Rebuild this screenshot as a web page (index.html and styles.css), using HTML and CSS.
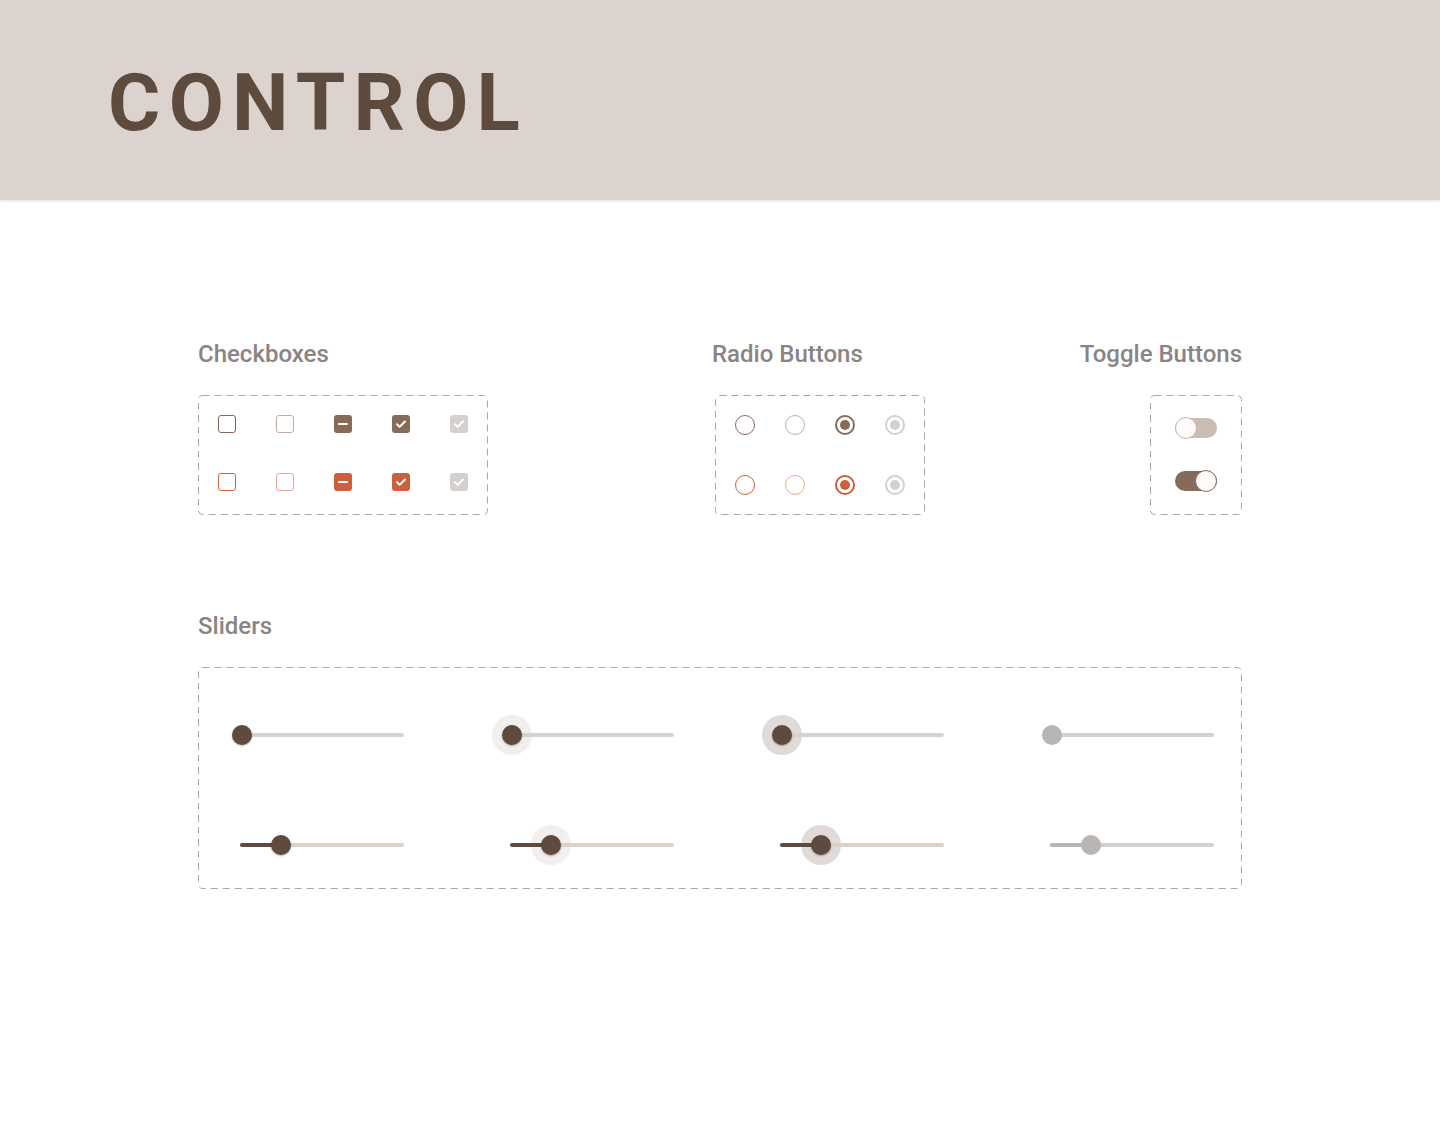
FILE: index.html
```html
<!DOCTYPE html>
<html lang="en">
<head>
<meta charset="utf-8">
<title>Control</title>
<link rel="stylesheet" href="styles.css">
</head>
<body>
<header class="hero">
  <h1 class="hero-title">CONTROL</h1>
</header>

<main class="page">
  <div class="row-top">
    <section class="group group-check">
      <h2 class="group-title">Checkboxes</h2>
      <div class="panel panel-check">
        <svg class="dash" aria-hidden="true"><rect x="0.5" y="0.5" rx="4" ry="4"/></svg>
        <div class="grid-check">
          <span class="cb cb-brown"></span>
          <span class="cb cb-brown-light"></span>
          <span class="cb cb-fill-brown"><i class="minus"></i></span>
          <span class="cb cb-fill-brown"><svg viewBox="0 0 18 18"><path d="M5 9.3l2.6 2.6L13 6.5"/></svg></span>
          <span class="cb cb-disabled"><svg viewBox="0 0 18 18"><path d="M5 9.3l2.6 2.6L13 6.5"/></svg></span>

          <span class="cb cb-orange"></span>
          <span class="cb cb-orange-light"></span>
          <span class="cb cb-fill-orange"><i class="minus"></i></span>
          <span class="cb cb-fill-orange"><svg viewBox="0 0 18 18"><path d="M5 9.3l2.6 2.6L13 6.5"/></svg></span>
          <span class="cb cb-disabled"><svg viewBox="0 0 18 18"><path d="M5 9.3l2.6 2.6L13 6.5"/></svg></span>
        </div>
      </div>
    </section>

    <section class="group group-radio">
      <h2 class="group-title">Radio Buttons</h2>
      <div class="panel panel-radio">
        <svg class="dash" aria-hidden="true"><rect x="0.5" y="0.5" rx="4" ry="4"/></svg>
        <div class="grid-radio">
          <span class="rb rb-brown"></span>
          <span class="rb rb-brown-light"></span>
          <span class="rb rb-on-brown"><i></i></span>
          <span class="rb rb-disabled"><i></i></span>

          <span class="rb rb-orange"></span>
          <span class="rb rb-orange-light"></span>
          <span class="rb rb-on-orange"><i></i></span>
          <span class="rb rb-disabled"><i></i></span>
        </div>
      </div>
    </section>

    <section class="group group-toggle">
      <h2 class="group-title">Toggle Buttons</h2>
      <div class="panel panel-toggle">
        <svg class="dash" aria-hidden="true"><rect x="0.5" y="0.5" rx="4" ry="4"/></svg>
        <div class="toggles">
          <span class="tg tg-off"><i class="tg-knob"></i></span>
          <span class="tg tg-on"><i class="tg-knob"></i></span>
        </div>
      </div>
    </section>
  </div>

  <section class="group group-slider">
    <h2 class="group-title">Sliders</h2>
    <div class="panel panel-slider">
      <svg class="dash" aria-hidden="true"><rect x="0.5" y="0.5" rx="4" ry="4"/></svg>
      <div class="grid-slider">
        <div class="sl"><span class="sl-track"></span><span class="sl-knob" style="left:2px"></span></div>
        <div class="sl"><span class="sl-halo halo-hover" style="left:2px"></span><span class="sl-track"></span><span class="sl-knob" style="left:2px"></span></div>
        <div class="sl"><span class="sl-halo halo-focus" style="left:2px"></span><span class="sl-track"></span><span class="sl-knob" style="left:2px"></span></div>
        <div class="sl sl-disabled"><span class="sl-track"></span><span class="sl-knob" style="left:2px"></span></div>

        <div class="sl"><span class="sl-track"></span><span class="sl-fill" style="width:41px"></span><span class="sl-knob" style="left:41px"></span></div>
        <div class="sl"><span class="sl-halo halo-hover" style="left:41px"></span><span class="sl-track"></span><span class="sl-fill" style="width:41px"></span><span class="sl-knob" style="left:41px"></span></div>
        <div class="sl"><span class="sl-halo halo-focus" style="left:41px"></span><span class="sl-track"></span><span class="sl-fill" style="width:41px"></span><span class="sl-knob" style="left:41px"></span></div>
        <div class="sl sl-disabled"><span class="sl-track"></span><span class="sl-fill" style="width:41px"></span><span class="sl-knob" style="left:41px"></span></div>
      </div>
    </div>
  </section>
</main>
</body>
</html>
```

FILE: styles.css
```css
* { box-sizing: border-box; }

html, body {
  margin: 0;
  padding: 0;
  background: #ffffff;
  font-family: Roboto, "Liberation Sans", Arial, sans-serif;
}

/* Header */
.hero {
  height: 200px;
  background: #dcd3ce;
  display: flex;
  align-items: center;
  padding: 5px 0 0 108px;
  box-shadow: 0 1px 3px rgba(0, 0, 0, 0.12);
  position: relative;
}

.hero-title {
  margin: 0;
  font-size: 80px;
  line-height: 80px;
  font-weight: 700;
  letter-spacing: 8.3px;
  color: #5e4b3d;
}

/* Page */
.page {
  width: 1044px;
  margin: 0 auto;
  padding-top: 140px;
}

.row-top {
  display: grid;
  grid-template-columns: 517px 1fr auto;
}

.group-toggle {
  display: flex;
  flex-direction: column;
  align-items: flex-end;
}

.group-title {
  margin: 0 0 27px;
  font-size: 24px;
  line-height: 28px;
  font-weight: 500;
  color: #8a8482;
}

.group-radio .group-title { margin-left: -3px; }

.panel {
  position: relative;
  border-radius: 4px;
}

.dash {
  position: absolute;
  left: 0;
  top: 0;
  width: calc(100% - 1px);
  height: calc(100% - 1px);
  overflow: visible;
  pointer-events: none;
}

.dash rect {
  width: 100%;
  height: 100%;
  fill: none;
  stroke: #b3a398;
  stroke-width: 1;
  stroke-dasharray: 7 5;
}

/* Checkboxes */
.panel-check {
  width: 290px;
  padding: 20px 20px 24px 20px;
}

.grid-check {
  display: grid;
  grid-template-columns: repeat(5, 18px);
  column-gap: 40px;
  row-gap: 40px;
}

.cb {
  width: 18px;
  height: 18px;
  border-radius: 3px;
  display: flex;
  align-items: center;
  justify-content: center;
}

.cb svg {
  width: 18px;
  height: 18px;
}

.cb svg path {
  fill: none;
  stroke: #ffffff;
  stroke-width: 2;
  stroke-linecap: round;
  stroke-linejoin: round;
}

.cb .minus {
  display: block;
  width: 10px;
  height: 2px;
  background: #ffffff;
  border-radius: 1px;
}

.cb-brown { border: 1px solid #86695a; }
.cb-brown-light { border: 1px solid #c2aca1; }
.cb-fill-brown { background: #866b58; }
.cb-disabled { background: #d3d0ce; }
.cb-orange { border: 1px solid #cc5f3c; }
.cb-orange-light { border: 1px solid #e8a996; }
.cb-fill-orange { background: #cc5f3c; }

/* Radios */
.panel-radio {
  width: 210px;
  padding: 20px 20px 20px 20px;
}

.grid-radio {
  display: grid;
  grid-template-columns: repeat(4, 20px);
  column-gap: 30px;
  row-gap: 40px;
}

.rb {
  width: 20px;
  height: 20px;
  border-radius: 50%;
  display: flex;
  align-items: center;
  justify-content: center;
}

.rb i {
  display: block;
  width: 10px;
  height: 10px;
  border-radius: 50%;
}

.rb-brown { border: 1px solid #86695a; }
.rb-brown-light { border: 1px solid #c2aca1; }
.rb-on-brown { border: 2px solid #866b58; }
.rb-on-brown i { background: #866b58; }
.rb-disabled { border: 2px solid #d3d0ce; }
.rb-disabled i { background: #d3d0ce; }
.rb-orange { border: 1px solid #cc5f3c; }
.rb-orange-light { border: 1px solid #e8a996; }
.rb-on-orange { border: 2px solid #cc5f3c; }
.rb-on-orange i { background: #cc5f3c; }

/* Toggles */
.panel-toggle {
  width: 92px;
  padding: 22px 25px 23px 25px;
}

.toggles {
  display: flex;
  flex-direction: column;
  gap: 31px;
}

.tg {
  position: relative;
  display: block;
  width: 42px;
  height: 22px;
}

.tg::before {
  content: "";
  position: absolute;
  left: 0;
  right: 0;
  top: 1px;
  height: 20px;
  border-radius: 10px;
}

.tg-knob {
  position: absolute;
  top: 0;
  width: 22px;
  height: 22px;
  border-radius: 50%;
  background: #fcfafa;
}

.tg-off::before { background: #cbbcb3; }
.tg-off .tg-knob { left: 0; border: 1px solid #c9b6ab; }
.tg-on::before { background: #866b58; }
.tg-on .tg-knob { right: 0; border: 1px solid #866b58; }

/* Sliders */
.group-slider {
  margin-top: 97px;
}

.panel-slider {
  width: 1044px;
  padding: 48px 28px 24px 42px;
}

.grid-slider {
  display: grid;
  grid-template-columns: repeat(4, 164px);
  column-gap: 106px;
  row-gap: 70px;
}

.sl {
  position: relative;
  height: 40px;
}

.sl-track {
  position: absolute;
  left: 0;
  right: 0;
  top: 18px;
  height: 4px;
  border-radius: 2px;
  background: #dbd1cb;
}

.sl-fill {
  position: absolute;
  left: 0;
  top: 18px;
  height: 4px;
  border-radius: 2px;
  background: #5f4b3d;
}

.sl-knob {
  position: absolute;
  top: 10px;
  width: 20px;
  height: 20px;
  margin-left: -10px;
  border-radius: 50%;
  background: #5f4b3d;
  box-shadow: 0 1px 2px rgba(0, 0, 0, 0.3);
}

.sl-halo {
  position: absolute;
  top: 0;
  width: 40px;
  height: 40px;
  margin-left: -20px;
  border-radius: 50%;
}

.halo-hover { background: #f2efee; }
.halo-focus { background: #e0dbd8; }

.sl-disabled .sl-track { background: #d3d0cf; }
.sl-disabled .sl-fill { background: #b9b5b3; }
.sl-disabled .sl-knob { background: #b9b5b3; box-shadow: none; }
```
